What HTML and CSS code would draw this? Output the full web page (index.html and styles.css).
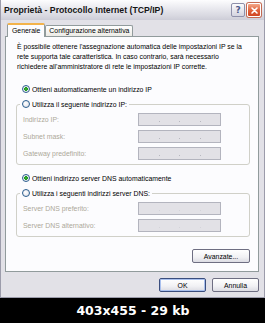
FILE: index.html
```html
<!DOCTYPE html>
<html lang="it">
<head>
<meta charset="utf-8">
<title>Proprietà - Protocollo Internet (TCP/IP)</title>
<link rel="stylesheet" href="styles.css">
</head>
<body>
<div class="window">
  <div class="titlebar">
    <span class="title">Proprietà - Protocollo Internet (TCP/IP)</span>
    <span class="tb-btn help">?</span>
    <span class="tb-btn close"><svg viewBox="0 0 11 11" width="11" height="11"><path d="M3 3 L8 8 M8 3 L3 8" stroke="#fff" stroke-width="1.6" stroke-linecap="round"/></svg></span>
  </div>
  <div class="client">
    <div class="tabs">
      <div class="tab active">Generale</div>
      <div class="tab">Configurazione alternativa</div>
    </div>
    <div class="panel">
      <p class="intro">È possibile ottenere l'assegnazione automatica delle impostazioni IP se la<br>rete supporta tale caratteristica. In caso contrario, sarà necessario<br>richiedere all'amministratore di rete le impostazioni IP corrette.</p>
      <div class="radio-row first"><span class="radio checked"></span>Ottieni automaticamente un indirizzo IP</div>
      <fieldset class="group ip-group">
        <legend><span class="radio"></span>Utilizza il seguente indirizzo IP:</legend>
        <div class="field"><span class="lbl">Indirizzo IP:</span><span class="input"><i></i><i></i><i></i></span></div>
        <div class="field"><span class="lbl">Subnet mask:</span><span class="input"><i></i><i></i><i></i></span></div>
        <div class="field"><span class="lbl">Gateway predefinito:</span><span class="input"><i></i><i></i><i></i></span></div>
      </fieldset>
      <div class="radio-row second"><span class="radio checked"></span>Ottieni indirizzo server DNS automaticamente</div>
      <fieldset class="group dns-group">
        <legend><span class="radio"></span>Utilizza i seguenti indirizzi server DNS:</legend>
        <div class="field"><span class="lbl">Server DNS preferito:</span><span class="input"><i></i><i></i><i></i></span></div>
        <div class="field"><span class="lbl">Server DNS alternativo:</span><span class="input"><i></i><i></i><i></i></span></div>
      </fieldset>
      <div class="adv-row"><span class="btn adv">Avanzate...</span></div>
    </div>
    <div class="footer">
      <span class="btn default">OK</span>
      <span class="btn">Annulla</span>
    </div>
  </div>
</div>
<div class="caption">403x455 - 29 kb</div>
</body>
</html>
```
FILE: styles.css
```css
html, body {
  margin: 0;
  padding: 0;
}
body {
  width: 265px;
  height: 323px;
  overflow: hidden;
  background: #000;
  font-family: "Liberation Sans", Arial, sans-serif;
  font-size: 6.9px;
  color: #000;
}
.window {
  height: 298px;
  box-sizing: border-box;
  background: #e2e1e7;
  border: 1px solid #9c9cab;
  border-top: 0;
  display: flex;
  flex-direction: column;
}
.titlebar {
  height: 20px;
  flex: none;
  display: flex;
  align-items: center;
  padding: 0 3px 0 3px;
  background: linear-gradient(#fdfdfe 0%, #ececf1 35%, #dadae2 75%, #cdcdd7 100%);
}
.title {
  flex: 1;
  font-weight: bold;
  font-size: 8.7px;
  color: #151515;
  white-space: nowrap;
}
.tb-btn {
  width: 14px;
  height: 14px;
  box-sizing: border-box;
  border-radius: 2px;
  margin-left: 2px;
  display: flex;
  align-items: center;
  justify-content: center;
}
.help {
  background: linear-gradient(#fbfbfd, #d4d4e0);
  border: 1px solid #8e90aa;
  color: #4a5a8c;
  font-weight: bold;
  font-size: 9px;
  font-family: "DejaVu Sans", sans-serif;
}
.close {
  background: linear-gradient(#f4a889, #e0613a 55%, #cf4522);
  border: 1px solid #fff;
  box-shadow: 0 0 0 1px #c46a52;
}
.client {
  flex: 1;
  display: flex;
  flex-direction: column;
  padding: 3px 5px 0 4px;
}
.tabs {
  display: flex;
  align-items: flex-end;
  height: 13px;
  margin-left: 2px;
}
.tab {
  height: 11px;
  box-sizing: border-box;
  padding: 0 3px;
  line-height: 10px;
  border: 1px solid #919b9c;
  border-bottom: 0;
  border-radius: 2px 2px 0 0;
  background: linear-gradient(#ffffff, #ecebe6);
  white-space: nowrap;
}
.tab.active {
  position: relative;
  z-index: 1;
  height: 14px;
  margin-bottom: -1px;
  padding: 0 4px;
  line-height: 12px;
  background: #fcfcfe;
  border-top: 2px solid #f3b34a;
}
.panel {
  height: 236px;
  box-sizing: border-box;
  flex: none;
  border: 1px solid #919b9c;
  background: #fcfcfe;
  display: flex;
  flex-direction: column;
}
.intro {
  margin: 5px 0 0 11px;
  line-height: 10px;
  white-space: nowrap;
}
.radio-row {
  display: flex;
  align-items: center;
  height: 10px;
  margin-left: 16px;
  white-space: nowrap;
}
.radio-row.first { margin-top: 12px; }
.radio-row.second { margin-top: 8px; }
.radio {
  width: 8px;
  height: 8px;
  box-sizing: border-box;
  border-radius: 50%;
  border: 1px solid #2a5d8e;
  background: radial-gradient(circle at 40% 40%, #ffffff, #dcdce4);
  margin-right: 2px;
  flex: none;
}
.radio.checked {
  background: radial-gradient(circle, #3fb53a 0, #1f9a1f 1.6px, #e9e9ee 2.1px, #ffffff 4px);
}
.group {
  border: 1px solid #d0d0c8;
  border-radius: 3px;
  margin: 5px 8px 0 10px;
  padding: 4px 0 4px 0;
  min-inline-size: 0;
}
.group legend {
  display: flex;
  align-items: center;
  height: 10px;
  padding: 0 2px;
  margin-left: 3px;
  white-space: nowrap;
}
.field {
  display: flex;
  align-items: center;
  height: 13px;
  margin-left: 6px;
}
.field + .field { margin-top: 4px; }
.lbl {
  width: 115px;
  color: #aca899;
  white-space: nowrap;
}
.input {
  width: 83px;
  height: 13px;
  box-sizing: border-box;
  background: #e2e1e6;
  border: 1px solid #b3b4be;
  display: flex;
  align-items: flex-end;
  justify-content: space-evenly;
  padding-bottom: 3px;
}
.input i {
  width: 1px;
  height: 1px;
  background: #b8b8c0;
}
.dns-group .input i { background: #d4d4da; }
.adv-row {
  display: flex;
  justify-content: flex-end;
  margin: 12px 8px 0 0;
}
.btn {
  display: flex;
  align-items: center;
  justify-content: center;
  height: 14px;
  box-sizing: border-box;
  border: 1px solid #6e6e82;
  border-radius: 2px;
  background: linear-gradient(#ffffff, #f1f1f4 60%, #dcdce3);
  white-space: nowrap;
}
.adv { width: 58px; }
.footer {
  display: flex;
  justify-content: flex-end;
  gap: 6px;
  margin-top: 6px;
}
.footer .btn { width: 47px; }
.btn.default {
  border-color: #3b4e7e;
  box-shadow: inset 0 0 0 1px #a9c0ee;
}
.caption {
  height: 25px;
  display: flex;
  align-items: center;
  justify-content: center;
  color: #fff;
  font-family: "DejaVu Sans", Verdana, sans-serif;
  font-weight: bold;
  font-size: 12.5px;
  padding-left: 1px;
}
```
